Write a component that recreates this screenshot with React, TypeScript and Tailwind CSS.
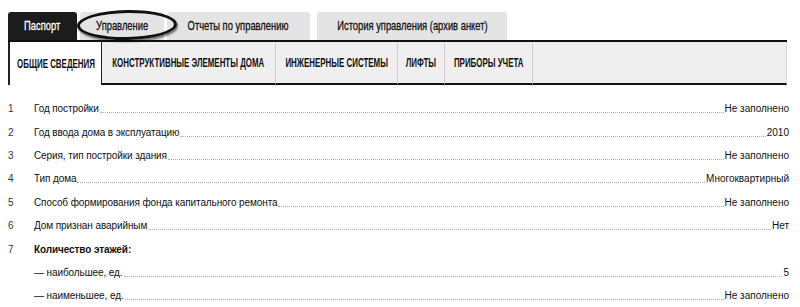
import React from 'react';

const arial = { fontFamily: '"Liberation Sans", Arial, sans-serif' };

const topTabs = [
  { label: 'Паспорт', w: 'w-[69px]', active: true },
  { label: 'Управление', w: 'w-[84px]', circled: true },
  { label: 'Отчеты по управлению', w: 'w-[143px]' },
  { label: 'История управления (архив анкет)', w: 'w-[190px] ml-[4px]' },
];

const subTabs = [
  { label: 'ОБЩИЕ СВЕДЕНИЯ', w: 'w-[94px]', active: true },
  { label: 'КОНСТРУКТИВНЫЕ ЭЛЕМЕНТЫ ДОМА', w: 'w-[174px]' },
  { label: 'ИНЖЕНЕРНЫЕ СИСТЕМЫ', w: 'w-[122px]' },
  { label: 'ЛИФТЫ', w: 'w-[47px]' },
  { label: 'ПРИБОРЫ УЧЕТА', w: 'w-[88px]' },
];

type Row = { n?: string; label: string; value?: string; bold?: boolean };

const rows: Row[] = [
  { n: '1', label: 'Год постройки', value: 'Не заполнено' },
  { n: '2', label: 'Год ввода дома в эксплуатацию', value: '2010' },
  { n: '3', label: 'Серия, тип постройки здания', value: 'Не заполнено' },
  { n: '4', label: 'Тип дома', value: 'Многоквартирный' },
  { n: '5', label: 'Способ формирования фонда капитального ремонта', value: 'Не заполнено' },
  { n: '6', label: 'Дом признан аварийным', value: 'Нет' },
  { n: '7', label: 'Количество этажей:', bold: true },
  { label: '— наибольшее, ед.', value: '5' },
  { label: '— наименьшее, ед.', value: 'Не заполнено' },
];

export default function App() {
  return (
    <div className="w-[800px] h-[307px] bg-white overflow-hidden" style={arial}>
      {/* top tabs */}
      <div className="flex items-end gap-[3px] pl-[8px] pt-[12px]">
        {topTabs.map((t) => (
          <div
            key={t.label}
            className={`relative h-[28px] flex items-center justify-center rounded-t-[3px] text-[13px] whitespace-nowrap ${t.w} ${
              t.active ? 'bg-[#1c1c1c] text-white' : 'bg-[#e4e4e4] text-[#111]'
            }`}
          >
            <span className="inline-block scale-x-[0.72] [-webkit-text-stroke:0.3px_currentColor]">{t.label}</span>
            {t.circled && (
              <div className="absolute z-10 left-[-3px] top-[-2px] w-[100px] h-[30px] rounded-[50%] border-[3px] border-[#111] shadow-[1px_2px_2px_rgba(0,0,0,0.5)] -rotate-1" />
            )}
          </div>
        ))}
      </div>

      {/* sub tabs */}
      <div className="ml-[8px] w-[779px] h-[45px] flex bg-[#efefef] border-t-2 border-[#111]">
        {subTabs.map((t) => (
          <div
            key={t.label}
            className={`h-full flex items-center justify-center text-[12px] font-bold text-[#111] whitespace-nowrap ${t.w} ${
              t.active
                ? 'bg-white border-l-2 border-r border-[#222]'
                : 'border-b-2 border-b-[#111] border-r border-r-[#cfcfcf]'
            }`}
          >
            <span className="inline-block scale-x-[0.66]">{t.label}</span>
          </div>
        ))}
        <div className="flex-1 h-full border-b-2 border-b-[#111] border-r border-r-[#d8d8d8]" />
      </div>

      {/* rows */}
      <div className="pt-[12px] pl-[8px] pr-[11px] text-[10px] text-[#111]">
        {rows.map((r, i) => (
          <div key={i} className="h-[23.4px] flex items-center">
            <div className="w-[26px] shrink-0 text-[#333]">{r.n}</div>
            <div className={`shrink-0 tracking-[-0.1px] ${r.bold ? 'font-bold' : ''}`}>{r.label}</div>
            {r.value !== undefined && (
              <>
                <div className="flex-1 mt-[8px] mx-[1px] border-b border-dotted border-[#aaa]" />
                <div className="shrink-0">{r.value}</div>
              </>
            )}
          </div>
        ))}
      </div>
    </div>
  );
}
